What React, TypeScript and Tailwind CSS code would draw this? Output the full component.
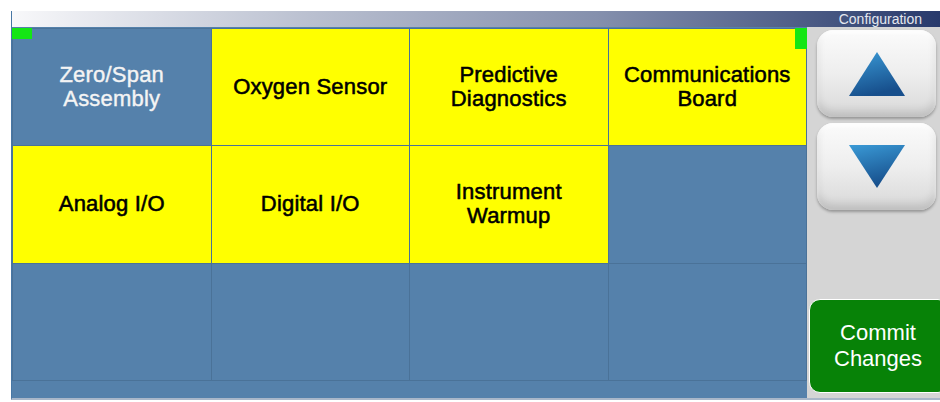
import React from 'react';

type Cell = { label?: string; active?: boolean };

const cells: Cell[] = [
  { label: 'Zero/Span\nAssembly' },
  { label: 'Oxygen Sensor', active: true },
  { label: 'Predictive\nDiagnostics', active: true },
  { label: 'Communications\nBoard', active: true },
  { label: 'Analog I/O', active: true },
  { label: 'Digital I/O', active: true },
  { label: 'Instrument\nWarmup', active: true },
  {},
  {},
  {},
  {},
  {},
];

function Arrow({ up }: { up: boolean }) {
  const id = up ? 'gradUp' : 'gradDown';
  return (
    <svg width="58" height="46" viewBox="0 0 58 46">
      <defs>
        <linearGradient id={id} x1="0" y1="0" x2="0.3" y2="1">
          <stop offset="0%" stopColor="#3a9ad6" />
          <stop offset="100%" stopColor="#174f8c" />
        </linearGradient>
      </defs>
      {up ? (
        <polygon points="29,1 57,45 1,45" fill={`url(#${id})`} />
      ) : (
        <polygon points="1,1 57,1 29,44" fill={`url(#${id})`} />
      )}
    </svg>
  );
}

function ScrollButton({ up }: { up: boolean }) {
  return (
    <button className="flex h-[87px] w-[119px] items-center justify-center rounded-[16px] bg-gradient-to-b from-[#fbfbfb] via-[#eeeeee] to-[#d8d8d8] shadow-[inset_0_-6px_8px_rgba(0,0,0,0.12),inset_0_3px_4px_rgba(255,255,255,0.9),0_2px_3px_rgba(0,0,0,0.3)]">
      <Arrow up={up} />
    </button>
  );
}

export default function App() {
  return (
    <div className="h-[402px] w-[940px] bg-white pl-[11px] pt-[11px] font-['Liberation_Sans',Arial,sans-serif]">
      <div className="flex h-[389px] flex-col border-b-2 border-l border-b-[#a9b7c9] border-l-[#4877a5]">
        {/* title bar */}
        <div className="flex h-[16px] items-center justify-end bg-[linear-gradient(to_right,#f8f8fa_0%,#bac0d0_32%,#8590ad_63%,#283a6c_100%)] pr-[18px]">
          <span className="text-[14px] leading-[16px] text-[#e4e7ef]">Configuration</span>
        </div>

        <div className="flex flex-1 overflow-hidden">
          {/* module grid */}
          <div className="relative flex w-[795px] flex-col bg-[#5581ab] pt-px">
            <div className="grid h-[353px] grid-cols-4 grid-rows-3 gap-px bg-[#4a7298] p-px">
              {cells.map((c, i) => (
                <div
                  key={i}
                  className={
                    c.active
                      ? 'flex items-center justify-center whitespace-pre-line bg-[#ffff00] text-center text-[22px] leading-[24px] tracking-[0.2px] text-black [-webkit-text-stroke:0.55px]'
                      : 'flex items-center justify-center whitespace-pre-line bg-[#5581ab] text-center text-[22px] leading-[24px] tracking-[0.2px] text-[#f4f4f4] [-webkit-text-stroke:0.4px]'
                  }
                >
                  {c.label}
                </div>
              ))}
            </div>
            <div className="flex-1" />
            <div className="absolute left-0 top-px h-[11px] w-[20px] bg-[#14e614]" />
            <div className="absolute right-0 top-px h-[21px] w-[12px] bg-[#14e614]" />
          </div>

          {/* side controls */}
          <div className="flex flex-1 flex-col overflow-hidden bg-[#d5d5d5] pl-[10px] pt-[3px]">
            <ScrollButton up />
            <div className="mt-[6px]">
              <ScrollButton up={false} />
            </div>
            <div className="flex-1" />
            <button className="-ml-[8px] mb-[5px] flex h-[94px] w-[140px] flex-col items-start justify-center rounded-[11px] border border-white bg-[#078207] pl-[24px] text-[22px] leading-[26px] text-white">
              <span className="w-[88px] text-center">Commit</span>
              <span className="w-[88px] text-center">Changes</span>
            </button>
          </div>
        </div>
      </div>
    </div>
  );
}
